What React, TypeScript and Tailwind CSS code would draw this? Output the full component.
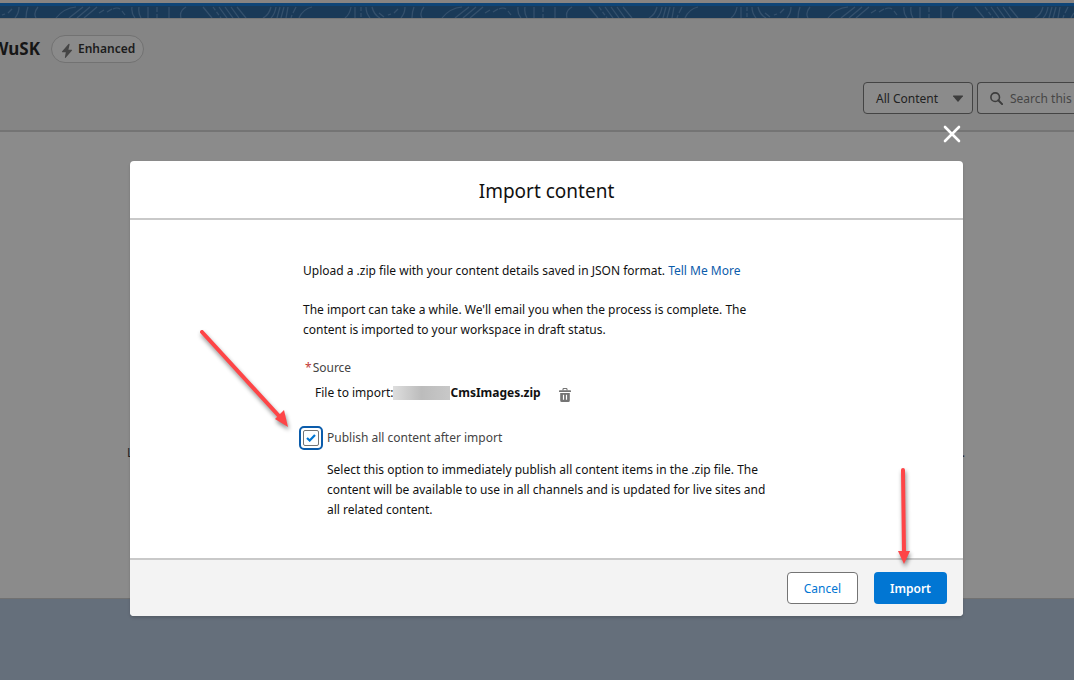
import React from "react";

function BandPattern() {
  return (
    <svg className="block h-3 w-full" aria-hidden="true">
      <defs>
        <pattern id="contours" width="386" height="12" patternUnits="userSpaceOnUse">
          <g fill="none" stroke="#34506c" strokeWidth="1.2">
            <path d="M2 9l3-1M8 7l4-4M19 1q0 6-4 11M28 1q-2 5-2 11M38 1q-5 6-2 11" />
            <path d="M56 12q8-10 20-11M69 12L83 1M77 12L90 1M84 12L97 1M99 7l5-3" />
            <path d="M107 6l5-3M113 3q4-2 7 0M122 5l3 4M132 1q-1 6 3 11M139 1q-1 6 2 11M148 1v11" />
            <path d="M157 1v11" strokeDasharray="5 2" />
            <path d="M169 1v11M186 1q-7 4-5 11M203 1l9 11M219 1l8 11M225 1l8 11M231 1l8 11M237 1l9 11" />
            <path d="M213 1l8 11" strokeDasharray="4 2" />
            <path d="M271 1q-2 8-8 11M276 1q-1 7-5 11M280 1l-3 11M284 1l-3 11M288 1l-2 11M296 1l-3 6M292 9l-1 3M312 1q-9 2-13 11" />
            <path d="M351 1q-1 7-6 11M355 1v11M366 1q0 6 4 11M372 1q2 8 8 11M379 7l5 4" />
            <path d="M361 1v11" strokeDasharray="4 2" />
          </g>
        </pattern>
      </defs>
      <rect width="100%" height="12" fill="url(#contours)" />
    </svg>
  );
}

function PageBackground() {
  return (
    <div className="flex min-h-screen flex-col bg-[#656f7b]">
      <div className="h-[3px] bg-[#888482]" />
      <div className="border-t-[3px] border-[#0f4577] bg-[#1a3a58]">
        <BandPattern />
      </div>
      <header className="flex flex-col border-t border-b-2 border-t-[#767676] border-b-[#747474] bg-[#858585]">
        <div className="flex items-center gap-[11px] pt-4">
          <h1 className="-ml-2 text-[17px] leading-7 font-bold text-[#161616]">WuSK</h1>
          <span className="flex h-7 items-center gap-1 rounded-full border border-[#727272] bg-[#8a8a8a] px-2 text-xs font-semibold text-[#1c1c1c]">
            <svg className="mt-1 h-4 w-[14px]" viewBox="0 0 14 16" aria-hidden="true">
              <path d="M8.5 1L2 8.5q-.4.7.4.7h3.4L4.900 14.500q.1.9.8.2L12 7.400q.4-.7-.4-.7H8.400L9.600 1.600Q9.500.4 8.500 1z" fill="#454545" />
            </svg>
            Enhanced
          </span>
        </div>
        <div className="flex items-center justify-end gap-1 overflow-hidden pt-[19px] pb-4">
          <button type="button" className="flex h-8 w-[110px] shrink-0 items-center justify-between rounded border border-[#444] bg-[#8b8b8b] pt-px pr-2 pl-3 text-xs text-[#222]">
            All Content
            <svg className="h-[7px] w-3" viewBox="0 0 12 7" aria-hidden="true">
              <path d="M1.500.5h9q.8 0 .4.7L6.500 6.600q-.5.4-1 0L1.100 1.200Q.7.5 1.500.5z" fill="#3d3d3d" />
            </svg>
          </button>
          <label className="-mr-1 flex h-8 w-[101px] shrink-0 items-center gap-[7px] rounded-l border border-r-0 border-[#444] bg-[#8b8b8b] pl-3">
            <svg className="h-[13px] w-[13px] shrink-0" viewBox="0 0 13 13" fill="none" stroke="#3d3d3d" aria-hidden="true">
              <circle cx="5.200" cy="5.200" r="4.300" strokeWidth="1.600" />
              <path d="M8.300 8.300l3.800 3.800" strokeWidth="2" strokeLinecap="round" />
            </svg>
            <input aria-label="Search" placeholder="Search this workspace" className="w-full min-w-0 bg-transparent pt-px text-xs outline-none placeholder:text-[#464646]" />
          </label>
        </div>
      </header>
      <main className="flex h-[467px] items-center justify-between border-b border-[#717171] bg-[#8b8b8b] pt-44 pr-[109px] pl-[127px] text-xs text-[#222]">
        <span>L</span>
        <span>.</span>
      </main>
    </div>
  );
}

function Arrow({ className, width, height, line, head }: { className: string; width: number; height: number; line: string; head: string }) {
  return (
    <svg className={className} width={width} height={height} viewBox={`0 0 ${width} ${height}`} aria-hidden="true">
      <path d={line} stroke="#fe4547" strokeWidth="4" strokeLinecap="round" />
      <path d={head} fill="#fe4547" />
    </svg>
  );
}

function ImportDialog() {
  return (
    <div className="absolute inset-0 flex flex-col pt-[125px] pr-[111px] pl-[130px]">
      <button type="button" aria-label="Close" className="mr-[2px] mb-[18px] self-end">
        <svg className="h-[18px] w-[18px]" viewBox="0 0 18 18" fill="none" stroke="#fff" strokeWidth="2.600" strokeLinecap="round">
          <path d="M2 2l14 14M16 2L2 16" />
        </svg>
      </button>
      <section role="dialog" aria-labelledby="dialog-title" className="flex flex-col rounded bg-white text-[#111] shadow-[0_2px_3px_rgba(0,0,0,0.16)]">
        <header className="border-b-2 border-[#c9c9c9] px-4 pt-[18px] pb-[14px]">
          <h2 id="dialog-title" className="text-center text-[19px] leading-[25px]">Import content</h2>
        </header>
        <div className="flex flex-col pt-[41px] pr-4 pb-[38px] pl-[173px] text-xs leading-5">
          <p>
            Upload a .zip file with your content details saved in JSON format.{" "}
            <a href="#more" className="text-[#0b5cab]">Tell Me More</a>
          </p>
          <p className="mt-[19px] max-w-[472px]">
            The import can take a while. We'll email you when the process is complete. The content is imported to your workspace in draft status.
          </p>
          <div className="mt-[18px] flex gap-px pl-[2px] text-[#444]">
            <span className="text-[#c23934]">*</span>
            <span>Source</span>
          </div>
          <div className="mt-[5px] flex items-center pl-3">
            <span>File to import:</span>
            <span className="h-[14px] w-[57px] bg-linear-to-r from-[#dedede] via-[#bcbcbc] to-[#c8c8c8]" />
            <strong className="font-bold">CmsImages.zip</strong>
            <button type="button" aria-label="Remove file" className="mt-1 ml-[18px]">
              <svg className="h-[14px] w-3" viewBox="0 0 12 14" aria-hidden="true">
                <path d="M4 2.500V1.300Q4 .5 4.800.5h2.400q.8 0 .8.8v1.200" fill="none" stroke="#747474" strokeWidth="1.100" />
                <path d="M.6 2.300h10.800q.6 0 .6.6v.5q0 .5-.6.5H.6Q0 3.900 0 3.400v-.5q0-.6.6-.6z" fill="#747474" />
                <path d="M1.200 5h9.600v7.500q0 1.500-1.500 1.500H2.700q-1.500 0-1.500-1.500zM3.900 6.800v5h1.200v-5zM6.900 6.800v5h1.200v-5z" fill="#747474" fillRule="evenodd" />
              </svg>
            </button>
          </div>
          <label className="-ml-1 mt-[23px] flex items-center gap-1 text-[#444]">
            <span className="grid h-6 w-6 place-items-center rounded-[5px] border-2 border-[#0b5cab]">
              <input type="checkbox" defaultChecked className="peer col-start-1 row-start-1 h-4 w-4 appearance-none rounded-[2px] border border-[#747474] bg-white outline-none" />
              <svg className="pointer-events-none col-start-1 row-start-1 hidden h-2 w-[10px] peer-checked:block" viewBox="0 0 10 8" fill="none" stroke="#0176d3" strokeWidth="2.200" aria-hidden="true">
                <path d="M1 4l2.700 2.500L9 1" />
              </svg>
            </span>
            Publish all content after import
          </label>
          <p className="mt-[10px] max-w-[476px] pl-6">
            Select this option to immediately publish all content items in the .zip file. The content will be available to use in all channels and is updated for live sites and all related content.
          </p>
        </div>
        <footer className="flex justify-end gap-4 rounded-b border-t-2 border-[#c9c9c9] bg-[#f3f3f3] px-4 py-3 text-xs">
          <button type="button" className="h-8 rounded border border-[#747474] bg-white px-4 pt-px text-[#0176d3]">Cancel</button>
          <button type="button" className="h-8 rounded bg-[#0176d3] px-4 pt-px font-semibold text-white">Import</button>
        </footer>
      </section>
    </div>
  );
}

export default function App() {
  return (
    <div className="relative min-h-screen overflow-hidden font-['Noto_Sans','Open_Sans',sans-serif]">
      <PageBackground />
      <ImportDialog />
      <Arrow className="pointer-events-none absolute top-[326px] left-[196px] drop-shadow-[1px_3px_2px_rgba(0,0,0,0.45)]" width={100} height={106} line="M6 6L83 90" head="M92 101L79 93L88 84z" />
      <Arrow className="pointer-events-none absolute top-[464px] left-[893px] drop-shadow-[1px_3px_2px_rgba(0,0,0,0.45)]" width={24} height={104} line="M10 6L11 89" head="M11 100L5 87L17 87z" />
    </div>
  );
}
